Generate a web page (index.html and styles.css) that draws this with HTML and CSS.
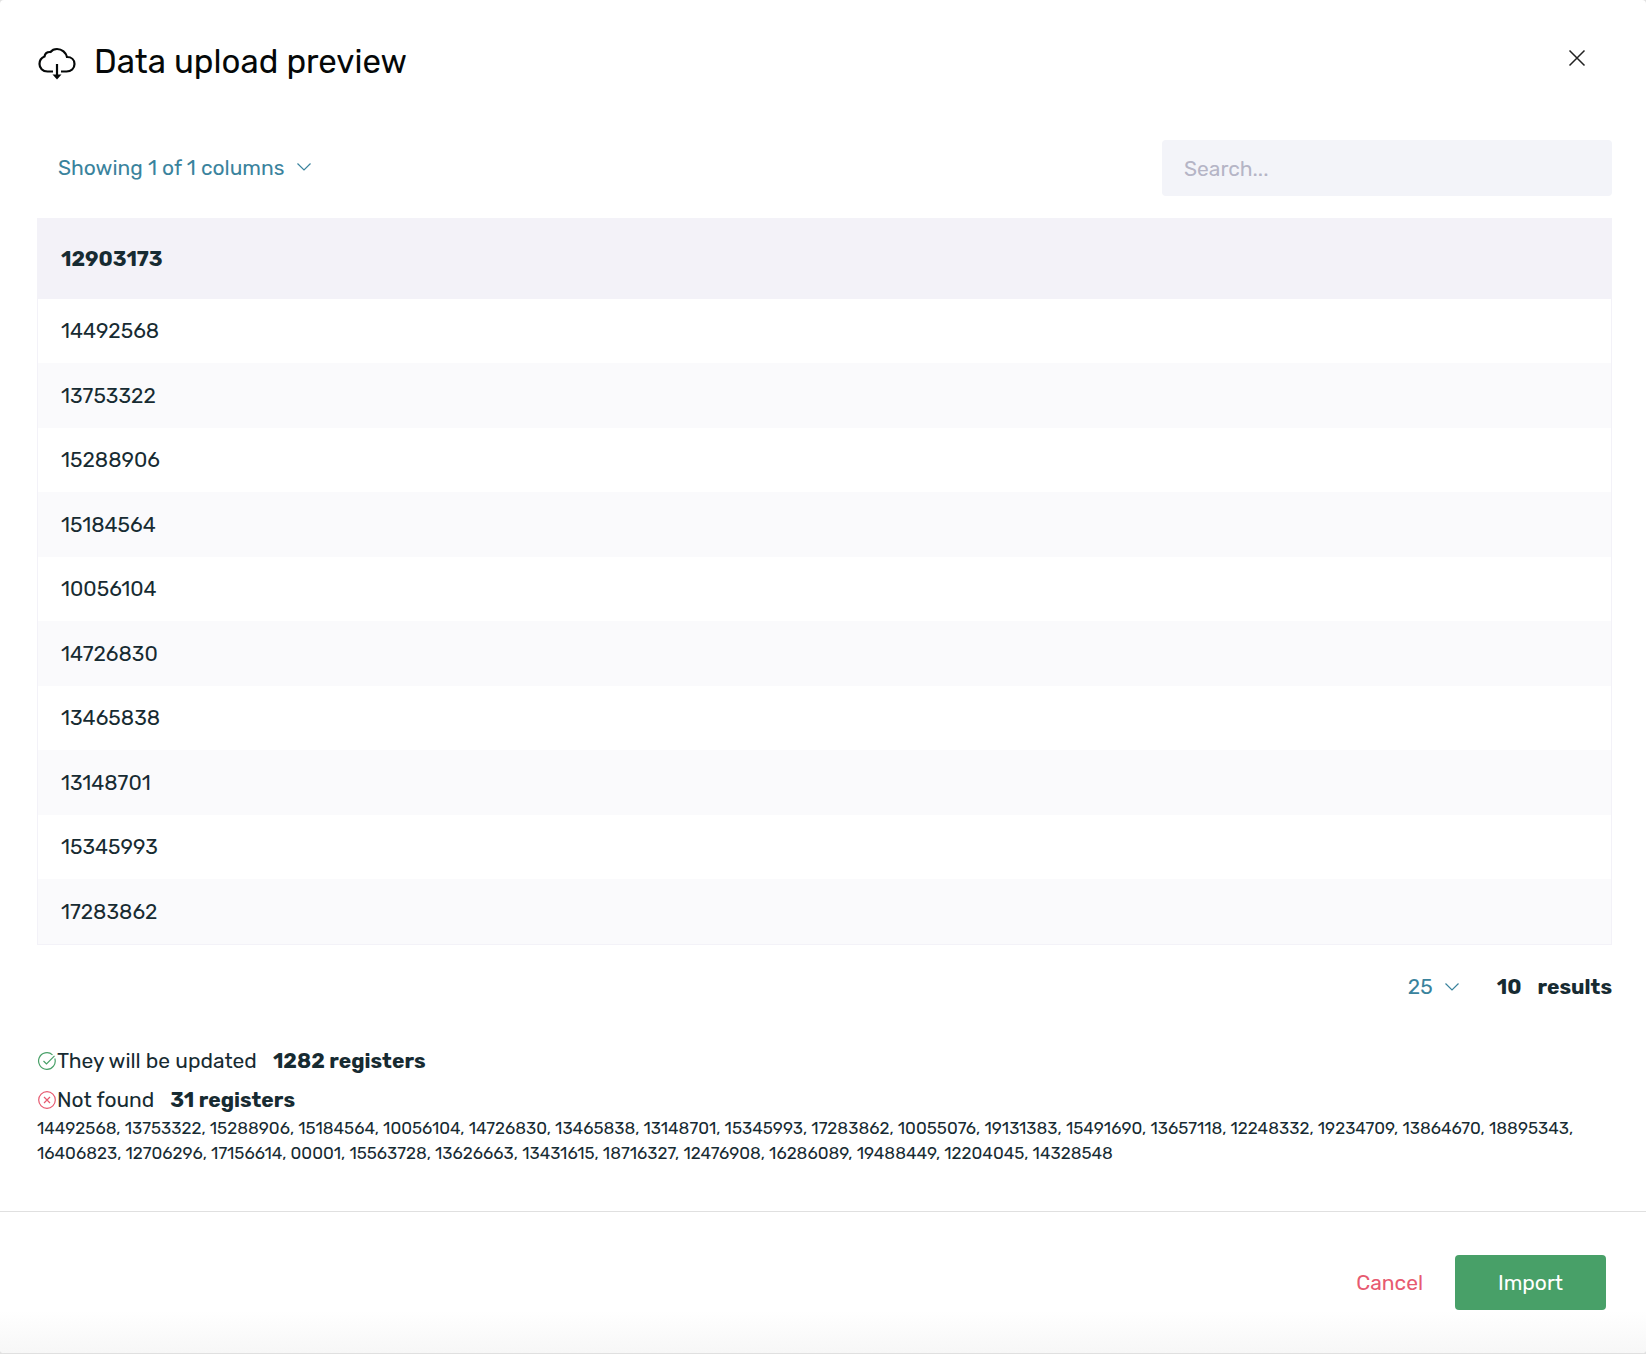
FILE: index.html
```html
<!DOCTYPE html>
<html lang="en">
<head>
  <meta charset="UTF-8" />
  <meta name="viewport" content="width=device-width, initial-scale=1.0"/>
  <title>Data upload preview</title>
  <link rel="stylesheet" href="styles.css">
</head>
<body>
  <div class="modal">
    <header class="modal-header">
      <svg class="cloud-icon" width="38" height="34" viewBox="0 0 38 34" fill="none" stroke="#050808" stroke-width="2.200">
        <path d="M15 24.500H9.500C4.500 24.500 1.500 21 1.500 17C1.500 13 4 10.500 6.500 9.500C7 6.500 9.500 4.800 12.500 5C14 3 16.500 2 19 2C24 2 28 5.500 29 10C33.500 10 36.500 13 36.500 17C36.500 21.500 33 24.500 28.500 24.500H23"/>
        <path d="M19 17V29"/>
        <path d="M14.500 27.500H23.500L19 32.500Z" fill="#050808" stroke="none"/>
      </svg>
      <h1>Data upload preview</h1>
      <button type="button" class="close" aria-label="Close">
        <svg width="18" height="18" viewBox="0 0 18 18" fill="none" stroke="#222" stroke-width="1.500">
          <path d="M1.500 1.500L16.500 16.500M16.500 1.500L1.500 16.500"/>
        </svg>
      </button>
    </header>

    <main class="modal-body">
      <div class="toolbar">
        <button type="button" class="columns">
          Showing 1 of 1 columns
          <svg width="16" height="12" viewBox="0 0 16 12" fill="none" stroke="currentColor" stroke-width="1.200">
            <path d="M1.500 1.500L8 8L14.500 1.500"/>
          </svg>
        </button>
        <input type="search" class="search" placeholder="Search..." aria-label="Search" />
      </div>

      <table>
        <thead>
          <tr><th scope="col">12903173</th></tr>
        </thead>
        <tbody>
          <tr><td>14492568</td></tr>
          <tr><td>13753322</td></tr>
          <tr><td>15288906</td></tr>
          <tr><td>15184564</td></tr>
          <tr><td>10056104</td></tr>
          <tr><td>14726830</td></tr>
          <tr><td>13465838</td></tr>
          <tr><td>13148701</td></tr>
          <tr><td>15345993</td></tr>
          <tr><td>17283862</td></tr>
        </tbody>
      </table>

      <div class="pager">
        <div class="page-size">
          <select aria-label="Results per page">
            <option>10</option>
            <option selected>25</option>
            <option>50</option>
          </select>
          <svg width="16" height="12" viewBox="0 0 16 12" fill="none" stroke="currentColor" stroke-width="1.200">
            <path d="M1.500 1.500L8 8L14.500 1.500"/>
          </svg>
        </div>
        <strong>10</strong>
        <strong>results</strong>
      </div>

      <div class="summary">
        <p class="status">
          <svg width="20" height="20" viewBox="0 0 20 20" fill="none" stroke="#48a068" stroke-width="1.200">
            <path d="M17.800 7.500A8.300 8.300 0 1 1 15.500 3.900"/>
            <path d="M6.500 10L9.500 13L17.500 4.800"/>
          </svg>
          <span>They will be updated</span>
          <strong>1282 registers</strong>
        </p>
        <p class="status">
          <svg width="20" height="20" viewBox="0 0 20 20" fill="none" stroke="#e75a70" stroke-width="1.200">
            <circle cx="10" cy="10" r="8.300"/>
            <path d="M7 7L13 13M13 7L7 13"/>
          </svg>
          <span>Not found</span>
          <strong>31 registers</strong>
        </p>
        <p class="registers">14492568, 13753322, 15288906, 15184564, 10056104, 14726830, 13465838, 13148701, 15345993, 17283862, 10055076, 19131383, 15491690, 13657118, 12248332, 19234709, 13864670, 18895343, 16406823, 12706296, 17156614, 00001, 15563728, 13626663, 13431615, 18716327, 12476908, 16286089, 19488449, 12204045, 14328548</p>
      </div>
    </main>

    <footer class="modal-footer">
      <button type="button" class="cancel">Cancel</button>
      <button type="submit" class="import">Import</button>
    </footer>
  </div>
</body>
</html>
```
FILE: styles.css
```css
* {
  box-sizing: border-box;
}
body {
  margin: 0;
  background: #e0e0e0;
  color: #172b32;
  font-family: Rubik, Roboto, sans-serif;
  font-size: 21px;
  line-height: 24px;
}
h1, p {
  margin: 0;
}
button, input, select {
  font: inherit;
}
button {
  padding: 0;
  border: none;
  background: none;
  cursor: pointer;
}
.modal {
  display: flex;
  flex-direction: column;
  min-height: 100vh;
  background: #fff;
  border-bottom: 1px solid #e0e0e0;
  border-radius: 4px;
}
.modal-header {
  display: flex;
  align-items: center;
  height: 124px;
  padding: 0 60px 0 38px;
}
.cloud-icon {
  margin-top: 4px;
}
.modal-header h1 {
  flex: 1;
  margin-left: 18px;
  color: #050808;
  font-size: 33px;
  font-weight: 400;
  line-height: 40px;
}
.close {
  display: flex;
  margin-bottom: 8px;
}
.modal-body {
  flex: 1;
  padding: 16px 34px 45px 37px;
}
.toolbar {
  display: flex;
  align-items: center;
  justify-content: space-between;
  margin-bottom: 22px;
}
.columns {
  display: flex;
  align-items: center;
  gap: 12px;
  margin-left: 21px;
  color: #3a839d;
}
.search {
  width: 450px;
  height: 56px;
  padding: 0 22px;
  border: none;
  border-radius: 4px;
  background: #f3f4f9;
}
.search::placeholder {
  color: #b5b5c6;
}
table {
  width: 100%;
  border-collapse: separate;
  border-spacing: 0;
  border: 1px solid #f3f2f8;
  border-top: none;
}
th, td {
  height: 64px;
  padding: 0 23px;
  text-align: left;
}
th {
  height: 81px;
  background: #f3f2f8;
}
tbody tr:nth-child(even) td {
  height: 65px;
  background: #fafafc;
}
.pager {
  display: flex;
  align-items: center;
  justify-content: flex-end;
  gap: 16px;
  margin-top: 30px;
}
.page-size {
  position: relative;
  margin-right: 21px;
  color: #3a839d;
}
.page-size select {
  appearance: none;
  display: block;
  width: 52px;
  padding: 0;
  border: none;
  background: none;
  color: inherit;
}
.page-size svg {
  position: absolute;
  right: 0;
  top: 7px;
  pointer-events: none;
}
.summary {
  margin-top: 50px;
}
.status {
  display: flex;
  align-items: center;
  margin-bottom: 15px;
}
.status strong {
  margin-left: 16px;
}
.status:nth-child(2) {
  margin-bottom: 4px;
}
.registers {
  font-size: 17px;
  line-height: 25px;
}
.modal-footer {
  display: flex;
  justify-content: flex-end;
  gap: 32px;
  padding: 43px 40px;
  border-top: 1px solid #e0e0e0;
  background: linear-gradient(#fff 70%, #f7f7f7);
  border-radius: 0 0 4px 4px;
}
.cancel {
  color: #e75a70;
}
.import {
  width: 151px;
  height: 55px;
  border-radius: 4px;
  background: #48a068;
  color: #fff;
}
```
